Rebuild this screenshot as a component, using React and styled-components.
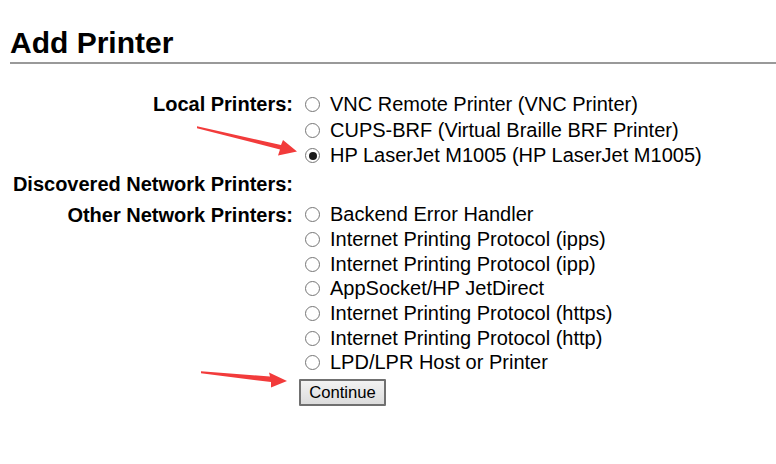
import React from "react";
import styled, { createGlobalStyle } from "styled-components";

const Global = createGlobalStyle`
  html, body { margin: 0; padding: 0; background: #fff; }
  body { font-family: "Liberation Sans", Arial, sans-serif; color: #000; }
`;

const Page = styled.div`
  position: relative;
  width: 776px;
  height: 464px;
  overflow: hidden;
  padding: 0 0 0 10px;
  box-sizing: border-box;
`;

const Title = styled.h2`
  margin: 0;
  padding: 27px 0 3px 0;
  font-size: 30px;
  font-weight: bold;
  line-height: 32px;
  border-bottom: 2px solid #999;
`;

const Form = styled.div`
  display: grid;
  grid-template-columns: 283px auto;
  column-gap: 6px;
  align-items: start;
  margin-top: 28px;
`;

const Label = styled.div`
  font-weight: bold;
  font-size: 20px;
  line-height: 25px;
  text-align: right;
  white-space: nowrap;
  padding-bottom: ${(p) => p.$pb || 0}px;
`;

const Options = styled.div`
  display: flex;
  flex-direction: column;
  padding-bottom: ${(p) => p.$pb || 0}px;
`;

const Option = styled.label`
  display: flex;
  align-items: center;
  height: ${(p) => p.$h || 25}px;
  font-size: 20px;
  white-space: nowrap;
`;

const Radio = styled.span`
  box-sizing: border-box;
  width: 15px;
  height: 15px;
  margin: 0 10px 0 6px;
  border-radius: 50%;
  border: 1px solid #767676;
  background: #fff;
  display: inline-flex;
  align-items: center;
  justify-content: center;
  flex: none;
  &::after {
    content: "";
    width: 8px;
    height: 8px;
    border-radius: 50%;
    background: ${(p) => (p.$checked ? "#1a1a1a" : "transparent")};
  }
`;

const Button = styled.button`
  margin-top: 4px;
  align-self: flex-start;
  font-family: "Liberation Sans", Arial, sans-serif;
  font-size: 16.67px;
  color: #000;
  padding: 2px 8px 3px;
  background: linear-gradient(#f2f2f2, #dcdcdc);
  border: 2px solid #707070;
  border-radius: 1px;
  height: 27px;
  width: 87px;
`;

const Overlay = styled.svg`
  position: absolute;
  left: 0;
  top: 0;
  pointer-events: none;
`;

const local = [
  { name: "VNC Remote Printer (VNC Printer)" },
  { name: "CUPS-BRF (Virtual Braille BRF Printer)" },
  { name: "HP LaserJet M1005 (HP LaserJet M1005)", checked: true },
];

const other = [
  "Backend Error Handler",
  "Internet Printing Protocol (ipps)",
  "Internet Printing Protocol (ipp)",
  "AppSocket/HP JetDirect",
  "Internet Printing Protocol (https)",
  "Internet Printing Protocol (http)",
  "LPD/LPR Host or Printer",
];

export default function App() {
  return (
    <Page>
      <Global />
      <Title>Add Printer</Title>
      <Form>
        <Label>Local Printers:</Label>
        <Options $pb={3}>
          {local.map((o) => (
            <Option key={o.name} $h={25.5}>
              <Radio $checked={o.checked} />
              {o.name}
            </Option>
          ))}
        </Options>
        <Label $pb={6}>Discovered Network Printers:</Label>
        <div />
        <Label>Other Network Printers:</Label>
        <Options>
          {other.map((o) => (
            <Option key={o} $h={24.7}>
              <Radio />
              {o}
            </Option>
          ))}
          <Button>Continue</Button>
        </Options>
      </Form>
      <Overlay width="776" height="464" viewBox="0 0 776 464">
        <polygon
          points="197,126.3 281,145 283,140 297,151.5 278,155.5 280,149.5 197,128.3"
          fill="#f23b3b"
        />
        <polygon
          points="201,371.3 270,376.5 269,372.5 287,381 271,387.5 271,382 201,373.3"
          fill="#f23b3b"
        />
      </Overlay>
    </Page>
  );
}
